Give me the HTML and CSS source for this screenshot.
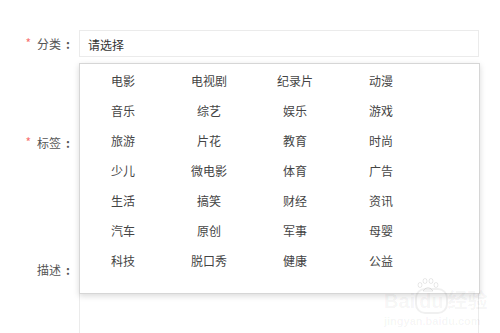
FILE: index.html
```html
<!DOCTYPE html>
<html>

<head>
  <title>分类选择</title>
  <link rel="stylesheet" href="styles.css">
</head>

<body>
  <div class="form">
    <div class="form-item row-category">
      <label class="form-label"><span class="required">*</span>分类<span class="colon">:</span></label>
      <div class="select-box">请选择</div>
    </div>

    <div class="form-item row-tags">
      <label class="form-label"><span class="required">*</span>标签<span class="colon">:</span></label>
      <div class="tag-box"></div>
    </div>

    <div class="form-item row-desc">
      <label class="form-label">描述<span class="colon">:</span></label>
      <div class="desc-box"></div>
    </div>

    <!-- Dropdown popup over the form -->
    <div class="dropdown">
      <div class="option">电影</div>
      <div class="option">电视剧</div>
      <div class="option">纪录片</div>
      <div class="option">动漫</div>
      <div class="option">音乐</div>
      <div class="option">综艺</div>
      <div class="option">娱乐</div>
      <div class="option">游戏</div>
      <div class="option">旅游</div>
      <div class="option">片花</div>
      <div class="option">教育</div>
      <div class="option">时尚</div>
      <div class="option">少儿</div>
      <div class="option">微电影</div>
      <div class="option">体育</div>
      <div class="option">广告</div>
      <div class="option">生活</div>
      <div class="option">搞笑</div>
      <div class="option">财经</div>
      <div class="option">资讯</div>
      <div class="option">汽车</div>
      <div class="option">原创</div>
      <div class="option">军事</div>
      <div class="option">母婴</div>
      <div class="option">科技</div>
      <div class="option">脱口秀</div>
      <div class="option">健康</div>
      <div class="option">公益</div>
    </div>

    <!-- Watermark -->
    <div class="watermark">
      <svg class="wm-paw" width="22" height="14" viewBox="0 0 22 14">
        <g fill="none" stroke="rgba(0,0,0,0.09)" stroke-width="1">
          <ellipse cx="3" cy="7" rx="2" ry="2.5" />
          <ellipse cx="8" cy="3" rx="2" ry="2.5" />
          <ellipse cx="14" cy="3" rx="2" ry="2.5" />
          <ellipse cx="19" cy="7" rx="2" ry="2.5" />
          <path d="M6 13 Q11 6 16 13 Z" />
        </g>
      </svg>
      <div class="wm-logo">Bai<span class="wm-du">du</span>经验</div>
      <div class="wm-url">jingyan.baidu.com</div>
    </div>
  </div>
</body>

</html>
```

FILE: styles.css
```css
html,
body {
  margin: 0;
  padding: 0;
  background: #FFFFFF;
  font-family: "Noto Sans CJK SC", "Noto Sans", sans-serif;
  font-size: 12px;
  color: #555;
  overflow: hidden;
}

.form {
  position: relative;
  width: 500px;
  height: 333px;
  padding-top: 30px;
  box-sizing: border-box;
  overflow: hidden;
}

.form-item {
  display: flex;
  align-items: flex-start;
}

.form-label {
  width: 79px;
  flex-shrink: 0;
  box-sizing: border-box;
  padding-right: 9px;
  text-align: right;
  line-height: 27px;
  color: #555;
}

.required {
  color: #f87272;
  margin-right: 6px;
  position: relative;
  top: -1px;
}

.colon {
  margin-left: 5px;
  font-weight: bold;
}

.select-box {
  width: 400px;
  height: 27px;
  line-height: 27px;
  box-sizing: border-box;
  border: 1px solid #ebebeb;
  padding-left: 8px;
  color: #333;
}

.row-tags {
  margin-top: 72px;
}

.tag-box {
  width: 400px;
  height: 27px;
}

.row-desc {
  margin-top: 100px;
}

.desc-box {
  width: 400px;
  height: 77px;
  box-sizing: border-box;
  border: 1px solid #ebebeb;
  border-bottom: none;
}

.dropdown {
  position: absolute;
  left: 79px;
  top: 63px;
  width: 401px;
  height: 231px;
  box-sizing: border-box;
  background: #FFFFFF;
  border: 1px solid #d6d6d6;
  box-shadow: 0 2px 6px rgba(0, 0, 0, 0.15);
  display: grid;
  grid-template-columns: repeat(4, 86px);
  grid-auto-rows: 30px;
  align-content: start;
  padding-top: 2px;
}

.option {
  text-align: center;
  line-height: 30px;
  color: #444;
}

.watermark {
  position: absolute;
  left: 384px;
  top: 290px;
  color: rgba(0, 0, 0, 0.05);
  font-family: "Liberation Sans", "Noto Sans CJK SC", sans-serif;
  font-weight: bold;
  pointer-events: none;
}

.wm-paw {
  position: absolute;
  left: 33px;
  top: -12px;
}

.wm-logo {
  font-size: 20px;
  line-height: 22px;
  white-space: nowrap;
}

.wm-du {
  border: 2px solid rgba(0, 0, 0, 0.06);
  border-radius: 10px;
  padding: 0 2px;
}

.wm-url {
  font-size: 11px;
  line-height: 14px;
  margin-top: 2px;
}
```
